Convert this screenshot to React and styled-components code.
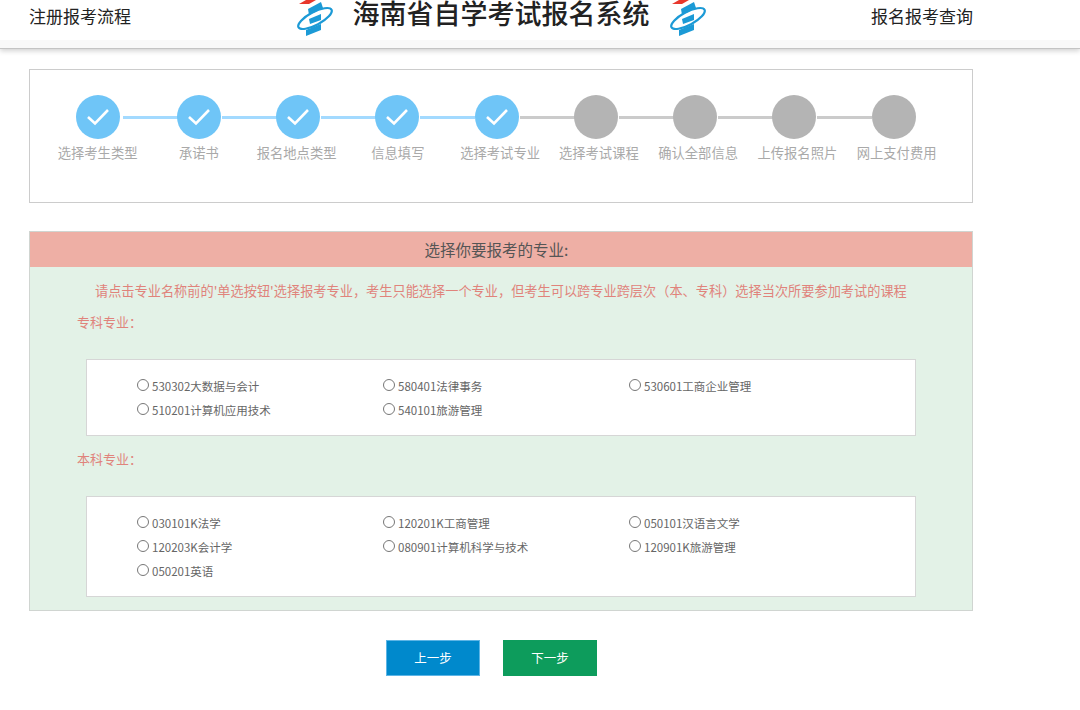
import React from "react";
import styled, { createGlobalStyle } from "styled-components";

const steps = [
  { name: "选择考生类型", done: true, nudge: 0 },
  { name: "承诺书", done: true, nudge: 0 },
  { name: "报名地点类型", done: true, nudge: -3 },
  { name: "信息填写", done: true, nudge: 1 },
  { name: "选择考试专业", done: true, nudge: 7 },
  { name: "选择考试课程", done: false, nudge: 6 },
  { name: "确认全部信息", done: false, nudge: 6 },
  { name: "上传报名照片", done: false, nudge: 6 },
  { name: "网上支付费用", done: false, nudge: 6 },
];

const zhuanke = [
  "530302大数据与会计",
  "580401法律事务",
  "530601工商企业管理",
  "510201计算机应用技术",
  "540101旅游管理",
];

const benke = [
  "030101K法学",
  "120201K工商管理",
  "050101汉语言文学",
  "120203K会计学",
  "080901计算机科学与技术",
  "120901K旅游管理",
  "050201英语",
];

function Logo() {
  return (
    <svg width="36" height="38" viewBox="0 0 36 38">
      <path d="M2 4 L9 0 H19 L12 4 Z" fill="#e8372c" />
      <path d="M11 9 L24 2 L26 8 L12 15 Z" fill="#1c9ad6" />
      <path d="M12 19 L24 14 L24 20 L13 24 Z" fill="#1c9ad6" />
      <path d="M9 30 L24 24 L24 30 L9 36 Z" fill="#1c9ad6" />
      <ellipse cx="18" cy="18.5" rx="18.7" ry="6.5" transform="rotate(-28 18 18.5)" fill="none" stroke="#1c9ad6" strokeWidth="2.2" />
    </svg>
  );
}

export default function App() {
  return (
    <>
      <GlobalStyle />
      <Header>
        <HeaderLink>注册报考流程</HeaderLink>
        <Brand>
          <Logo />
          <Title>海南省自学考试报名系统</Title>
          <Logo />
        </Brand>
        <HeaderLink>报名报考查询</HeaderLink>
      </Header>
      <Main>
        <StepBox>
          {steps.map((step, i) => (
            <Step key={step.name} $first={i === 0} $lineDone={i < 4} $last={i === steps.length - 1}>
              <Circle $done={step.done}>
                {step.done && (
                  <svg width="24" height="18" viewBox="0 0 24 18">
                    <path d="M2 9 L9 15.5 L22 2" fill="none" stroke="#fff" strokeWidth="2.6" />
                  </svg>
                )}
              </Circle>
              <StepName $nudge={step.nudge}>{step.name}</StepName>
            </Step>
          ))}
        </StepBox>
        <Panel>
          <PanelTitle>选择你要报考的专业:</PanelTitle>
          <PanelBody>
            <Notice>请点击专业名称前的'单选按钮'选择报考专业，考生只能选择一个专业，但考生可以跨专业跨层次（本、专科）选择当次所要参加考试的课程</Notice>
            <GroupLabel>专科专业：</GroupLabel>
            <OptionBox>
              {zhuanke.map((m) => (
                <Option key={m}>
                  <Radio type="radio" name="major" />
                  <span>{m}</span>
                </Option>
              ))}
            </OptionBox>
            <GroupLabel>本科专业：</GroupLabel>
            <OptionBox>
              {benke.map((m) => (
                <Option key={m}>
                  <Radio type="radio" name="major" />
                  <span>{m}</span>
                </Option>
              ))}
            </OptionBox>
          </PanelBody>
        </Panel>
        <Buttons>
          <NavButton $color="#0089cc" $edge="#5db5e6">上一步</NavButton>
          <NavButton $color="#0d9c5c" $edge="#0d9c5c">下一步</NavButton>
        </Buttons>
      </Main>
    </>
  );
}

const GlobalStyle = createGlobalStyle`
  body {
    margin: 0;
    background: #fff;
    font-family: "Noto Sans CJK SC", "Liberation Sans", sans-serif;
  }
`;

const Header = styled.header`
  box-sizing: border-box;
  height: 49px;
  width: 1080px;
  padding: 0 107px 9px 29px;
  display: flex;
  justify-content: space-between;
  align-items: flex-start;
  background: linear-gradient(#fff 40px, #f9f9f9 40px);
  border-bottom: 1px solid #c4c4c4;
  box-shadow: 0 2px 5px rgba(0, 0, 0, 0.18);
  overflow: hidden;
`;

const HeaderLink = styled.a`
  font-size: 17px;
  line-height: 31px;
  color: #222;
  width: 102px;
  white-space: nowrap;
`;

const Brand = styled.div`
  display: flex;
  align-items: flex-start;
  gap: 20px;
`;

const Title = styled.h1`
  margin: 0;
  font-size: 27px;
  line-height: 25px;
  font-weight: 500;
  color: #222;
  white-space: nowrap;
`;

const Main = styled.main`
  width: 944px;
  margin: 20px 0 0 29px;
`;

const StepBox = styled.section`
  box-sizing: border-box;
  height: 134px;
  padding: 25px 0 0 20px;
  display: flex;
  align-items: flex-start;
  border: 1px solid #ccc;
`;

const Step = styled.div`
  position: relative;
  width: ${(p) => (p.$first ? "95.25px" : "99.25px")};
  margin-right: ${(p) => (p.$first ? "4px" : "0")};
  display: flex;
  flex-direction: column;
  align-items: center;

  &::after {
    content: "";
    display: ${(p) => (p.$last ? "none" : "block")};
    position: absolute;
    top: 21px;
    left: 72.5px;
    width: 55px;
    height: 3px;
    background: ${(p) => (p.$lineDone ? "#a3daff" : "#cbcbcb")};
  }
`;

const Circle = styled.div`
  width: 44px;
  height: 44px;
  border-radius: 50%;
  display: flex;
  align-items: center;
  justify-content: center;
  background: ${(p) => (p.$done ? "#6fc5f7" : "#b4b4b4")};
`;

const StepName = styled.div`
  margin-top: 5px;
  margin-left: ${(p) => p.$nudge}px;
  font-size: 13.3px;
  line-height: 18px;
  color: #a9a9a9;
  white-space: nowrap;
`;

const Panel = styled.section`
  margin-top: 28px;
  border: 1px solid #d0d5d1;
  box-sizing: border-box;
  height: 380px;
  background: #e3f2e7;
`;

const PanelTitle = styled.h2`
  margin: 0;
  height: 35px;
  line-height: 35px;
  padding-right: 9px;
  text-align: center;
  font-size: 15.5px;
  font-weight: 400;
  color: #555;
  background: #eeafa5;
`;

const PanelBody = styled.div`
  padding: 15px 56px 0 47px;
`;

const Notice = styled.p`
  margin: 0 0 0 18px;
  font-size: 13.2px;
  line-height: 18px;
  color: #e0837b;
  white-space: nowrap;
`;

const GroupLabel = styled.div`
  margin-top: 13px;
  font-size: 13px;
  line-height: 18px;
  color: #e0837b;
`;

const OptionBox = styled.div`
  box-sizing: border-box;
  margin: 28px 0 14px 9px;
  padding: 14px 0 13px 50px;
  display: grid;
  grid-template-columns: repeat(3, 246px);
  grid-auto-rows: 24px;
  background: #fff;
  border: 1px solid #d6d6d6;
`;

const Option = styled.label`
  display: flex;
  align-items: center;
  gap: 3px;
  font-size: 11.5px;
  color: #666;
  white-space: nowrap;
`;

const Radio = styled.input`
  appearance: none;
  box-sizing: border-box;
  width: 12px;
  height: 12px;
  margin: -3px 0 0 0;
  border: 1px solid #777;
  border-radius: 50%;
  background: #fff;
`;

const Buttons = styled.div`
  margin-top: 29px;
  padding-left: 357px;
  display: flex;
  gap: 23px;
`;

const NavButton = styled.button`
  box-sizing: border-box;
  width: 94px;
  height: 36px;
  padding: 0 0 2px;
  font-family: inherit;
  font-size: 12.5px;
  color: #fff;
  background: ${(p) => p.$color};
  border: 1px solid ${(p) => p.$edge};
`;
